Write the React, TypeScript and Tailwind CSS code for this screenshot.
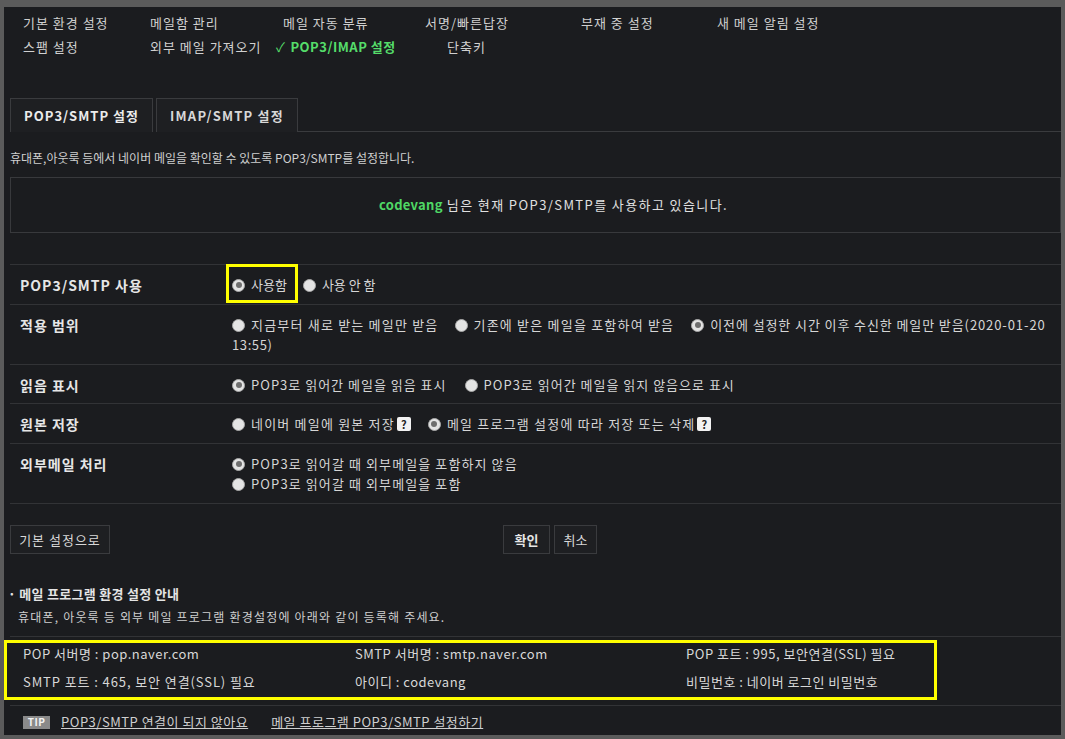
import React from "react";

function Radio({ checked = false }: { checked?: boolean }) {
  return (
    <span className="inline-flex h-[13px] w-[13px] shrink-0 items-center justify-center rounded-full border border-[#a9a9a9] bg-[#e4e4e4]">
      {checked && <span className="h-[6px] w-[6px] rounded-full bg-[#6e6e6e]" />}
    </span>
  );
}

function Help() {
  return (
    <span className="ml-[2px] inline-flex h-[14px] w-[14px] items-center justify-center rounded-[2px] bg-[#f2f2f2] text-[11px] font-bold leading-none tracking-normal text-[#222]">
      ?
    </span>
  );
}

function Opt({ checked = false, children, cls = "" }: { checked?: boolean; children: React.ReactNode; cls?: string }) {
  return (
    <span className={"inline-flex items-center gap-[6px] whitespace-nowrap " + cls}>
      <Radio checked={checked} />
      <span className="inline-flex items-center">{children}</span>
    </span>
  );
}

function Row({ label, h, children }: { label: string; h: string; children: React.ReactNode }) {
  return (
    <div className={"flex border-t border-[#323336] " + h}>
      <div className="w-[216px] shrink-0 pl-[10px] pt-[10px] text-[14px] font-bold leading-[20px] tracking-[1px] text-[#e6e6e6]">{label}</div>
      <div className="relative flex-1 pl-[6px] pt-[10px] text-[13px] leading-[20px] text-[#d6d6d6]">{children}</div>
    </div>
  );
}

export default function App() {
  return (
    <div className="h-[739px] w-[1065px] overflow-hidden bg-[#5b5b5b] pb-[4px] pl-[4px] pr-[4px] pt-[7px] font-['Noto_Sans_CJK_KR',sans-serif] text-[#d2d2d2]">
      <div className="h-full overflow-hidden bg-[#1b1c1f]">
        {/* top nav */}
        <nav className="pl-[19px] pt-[4px] text-[13px] leading-[24px] tracking-[1px] text-[#d0d0d0]">
          <div className="flex">
            <span className="w-[127px]">기본 환경 설정</span>
            <span className="w-[133px]">메일함 관리</span>
            <span className="w-[142px]">메일 자동 분류</span>
            <span className="w-[156px]">서명/빠른답장</span>
            <span className="w-[136px]">부재 중 설정</span>
            <span>새 메일 알림 설정</span>
          </div>
          <div className="flex">
            <span className="w-[127px]">스팸 설정</span>
            <span className="w-[126px]">외부 메일 가져오기</span>
            <span className="w-[171px] font-bold tracking-[0.5px] text-[#55dc6a]">
              <span className="mr-[5px] font-normal">✓</span>POP3/IMAP 설정
            </span>
            <span>단축키</span>
          </div>
        </nav>

        {/* tabs */}
        <div className="ml-[6px] mt-[39px] flex">
          <div className="flex h-[34px] w-[143px] items-center justify-center border border-b-0 border-[#3a3b3e] bg-[#1e1f22] text-[13px] font-bold tracking-[1px] text-[#ececec]">
            POP3/SMTP 설정
          </div>
          <div className="ml-[3px] flex h-[34px] w-[142px] items-center justify-center border border-b-0 border-[#3a3b3e] bg-[#1e1f22] text-[13px] font-bold tracking-[1.2px] text-[#d8d8d8]">
            IMAP/SMTP 설정
          </div>
          <div className="flex-1 border-b border-[#3a3b3e]" />
        </div>

        <p className="ml-[6px] mt-[18px] text-[12px] leading-[16px] text-[#cfcfcf]">
          휴대폰,아웃룩 등에서 네이버 메일을 확인할 수 있도록 POP3/SMTP를 설정합니다.
        </p>

        <div className="ml-[6px] mt-[11px] flex h-[56px] items-center justify-center border border-[#38393c] pl-[36px] text-[13px] tracking-[1.4px] text-[#e0e0e0]">
          <span className="mr-[4px] text-[13px] font-bold tracking-[0.3px] text-[#4fd865]">codevang</span>
          님은 현재 POP3/SMTP를 사용하고 있습니다.
        </div>

        {/* form table */}
        <div className="ml-[6px] mt-[31px] border-b border-[#323336]">
          <Row label="POP3/SMTP 사용" h="h-[40px]">
            <div className="flex items-center">
              <Opt checked>사용함</Opt>
              <Opt cls="ml-[16px]">사용 안 함</Opt>
            </div>
            <div className="absolute left-0 top-[-1px] h-[39px] w-[72px] border-[3px] border-[#ffff00]" />
          </Row>
          <Row label="적용 범위" h="h-[60px]">
            <div className="flex items-center whitespace-nowrap tracking-[1.2px]">
              <Opt>지금부터 새로 받는 메일만 받음</Opt>
              <Opt cls="ml-[16px]">기존에 받은 메일을 포함하여 받음</Opt>
              <Opt checked cls="ml-[17px] tracking-[0.9px]">이전에 설정한 시간 이후 수신한 메일만 받음(2020-01-20</Opt>
            </div>
            <div className="tracking-[0.6px]">13:55)</div>
          </Row>
          <Row label="읽음 표시" h="h-[39px]">
            <div className="flex items-center tracking-[1px]">
              <Opt checked>POP3로 읽어간 메일을 읽음 표시</Opt>
              <Opt cls="ml-[18px]">POP3로 읽어간 메일을 읽지 않음으로 표시</Opt>
            </div>
          </Row>
          <Row label="원본 저장" h="h-[40px]">
            <div className="flex items-center tracking-[1.2px]">
              <Opt>
                네이버 메일에 원본 저장<Help />
              </Opt>
              <Opt checked cls="ml-[17px]">
                메일 프로그램 설정에 따라 저장 또는 삭제<Help />
              </Opt>
            </div>
          </Row>
          <Row label="외부메일 처리" h="h-[60px]">
            <div className="flex flex-col tracking-[1.1px]">
              <Opt checked>POP3로 읽어갈 때 외부메일을 포함하지 않음</Opt>
              <Opt>POP3로 읽어갈 때 외부메일을 포함</Opt>
            </div>
          </Row>
        </div>

        {/* buttons */}
        <div className="ml-[6px] mt-[21px] flex items-center">
          <button className="h-[29px] w-[100px] border border-[#3a3b3e] bg-[#1e1f22] text-[13px] tracking-[1px] text-[#d8d8d8]">기본 설정으로</button>
          <button className="ml-[393px] h-[29px] w-[47px] border border-[#3a3b3e] bg-[#1e1f22] text-[13px] font-bold text-[#e6e6e6]">확인</button>
          <button className="ml-[4px] h-[29px] w-[43px] border border-[#3a3b3e] bg-[#1e1f22] text-[13px] text-[#d8d8d8]">취소</button>
        </div>

        <div className="ml-[4px] mt-[30px] text-[13px] font-bold leading-[20px] tracking-[0.3px] text-[#e4e4e4]">· 메일 프로그램 환경 설정 안내</div>
        <div className="ml-[14px] mt-[4px] text-[12px] leading-[18px] tracking-[1.2px] text-[#cfcfcf]">
          휴대폰, 아웃룩 등 외부 메일 프로그램 환경설정에 아래와 같이 등록해 주세요.
        </div>

        <div className="ml-[6px] mt-[10px] border-t border-[#323336]" />
        <div className="mt-[3px] w-[933px] border-[3px] border-[#ffff00] pb-[4px] text-[13px] leading-[22px] tracking-[0.5px] text-[#d8d8d8]">
          <div className="grid grid-cols-[332px_331px_1fr] gap-y-[6px] pl-[16px]">
            <span>POP 서버명 : pop.naver.com</span>
            <span>SMTP 서버명 : smtp.naver.com</span>
            <span>POP 포트 : 995, 보안연결(SSL) 필요</span>
            <span className="tracking-[0.9px]">SMTP 포트 : 465, 보안 연결(SSL) 필요</span>
            <span>아이디 : codevang</span>
            <span>비밀번호 : 네이버 로그인 비밀번호</span>
          </div>
        </div>
        <div className="ml-[6px] mt-[5px] border-t border-[#323336]" />

        <div className="ml-[19px] mt-[8px] flex items-center text-[13px] leading-[16px] tracking-[0.5px] text-[#cfcfcf]">
          <span className="mr-[11px] inline-flex h-[13px] w-[27px] items-center justify-center bg-[#8a8a8a] text-[10px] font-bold leading-none tracking-[0.5px] text-[#f4f4f4]">TIP</span>
          <span className="underline">POP3/SMTP 연결이 되지 않아요</span>
          <span className="ml-[23px] underline">메일 프로그램 POP3/SMTP 설정하기</span>
        </div>
      </div>
    </div>
  );
}
